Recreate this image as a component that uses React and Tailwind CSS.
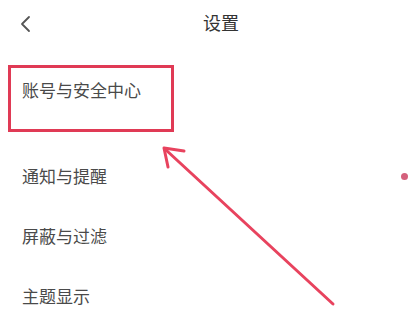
import React from 'react';

const rows = ['通知与提醒', '屏蔽与过滤', '主题显示'];

export default function App() {
    return (
        <div className="relative w-[412px] h-[310px] overflow-hidden bg-white text-[#4a4a4a]" style={{ fontFamily: '"Noto Sans CJK SC", "Noto Sans", sans-serif' }}>
            {/* header */}
            <div className="relative flex items-center h-[44px] px-[19px] pt-[1px]">
                <svg width="14" height="20" viewBox="0 0 14 20" className="shrink-0 mt-[2px]">
                    <path d="M10 3 L3 10 L10 17" fill="none" stroke="#555" strokeWidth="1.8" strokeLinecap="round" strokeLinejoin="round" />
                </svg>
                <div className="flex-1 text-center pl-[30px] text-[18px] text-[#333]">设置</div>
                <div className="w-[14px]" />
            </div>

            {/* list */}
            <div className="mt-[16px]">
                <div className="flex items-center h-[60px] pl-[22px] text-[17px]">账号与安全中心</div>
                <div className="mt-[26px]">
                    {rows.map((r, i) => (
                        <div key={r} className="flex items-center justify-between h-[60px] pl-[22px] pr-[4px] text-[17px]">
                            <span>{r}</span>
                            {i === 0 && <span className="w-[7px] h-[7px] rounded-full bg-[#d4607c]" />}
                        </div>
                    ))}
                </div>
            </div>

            {/* annotation */}
            <div className="absolute left-[8px] top-[65px] w-[166px] h-[67px] border-[3px] border-[#e03a55]" />
            <svg className="absolute inset-0" width="412" height="310" viewBox="0 0 412 310">
                <line x1="333" y1="304" x2="166" y2="150" stroke="#e8435e" strokeWidth="3" strokeLinecap="round" />
                <polyline points="184,151 164,148 168,167" fill="none" stroke="#e8435e" strokeWidth="3" strokeLinecap="round" strokeLinejoin="round" />
            </svg>
        </div>
    );
}
